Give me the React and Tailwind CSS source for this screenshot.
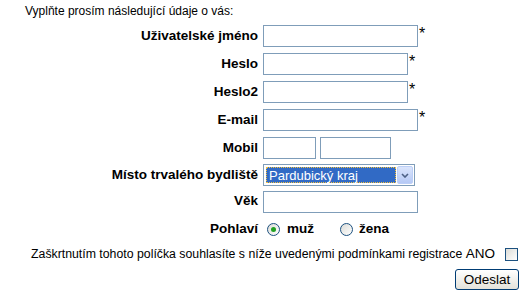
import { useState } from 'react';

const font = { fontFamily: '"Liberation Sans", Arial, sans-serif' };

function Row({ label, h = 'h-[28px]', children }) {
  return (
    <div className={`flex items-center ${h}`}>
      <div className="w-[258px] text-right text-[13.5px] font-bold text-black">{label}</div>
      <div className="ml-[5px] flex items-center">{children}</div>
    </div>
  );
}

function TextBox({ w = 'w-[155px]', type = 'text' }) {
  return (
    <input
      type={type}
      className={`${w} h-[22px] border border-[#7f9db9] bg-white px-1 text-[13px] outline-none`}
    />
  );
}

function Star() {
  return <span className="ml-[1px] self-start -mt-[1px] text-[16px] leading-[20px] text-black">*</span>;
}

function Radio({ checked, onClick }) {
  return (
    <span
      onClick={onClick}
      className="flex h-[13px] w-[13px] cursor-pointer items-center justify-center rounded-full border border-[#1c5180] bg-gradient-to-br from-[#dcdcd7] to-white"
    >
      {checked && <span className="h-[5px] w-[5px] rounded-full bg-[#21a121]" />}
    </span>
  );
}

export default function App() {
  const [sex, setSex] = useState('m');
  const [agree, setAgree] = useState(false);

  return (
    <div className="w-[530px] h-[298px] bg-white text-black" style={font}>
      <div className="h-[22px] pl-[25px] pt-[2px] text-[12px]">Vyplňte prosím následující údaje o vás:</div>

      <Row label="Uživatelské jméno">
        <TextBox />
        <Star />
      </Row>
      <Row label="Heslo">
        <TextBox w="w-[145px]" type="password" />
        <Star />
      </Row>
      <Row label="Heslo2">
        <TextBox w="w-[145px]" type="password" />
        <Star />
      </Row>
      <Row label="E-mail">
        <TextBox />
        <Star />
      </Row>
      <Row label="Mobil">
        <TextBox w="w-[53px]" />
        <span className="w-[4px]" />
        <TextBox w="w-[71px]" />
      </Row>
      <Row label="Místo trvalého bydliště" h="h-[26px]">
        <div className="flex h-[22px] w-[152px] items-center border border-[#7f9db9] bg-white pl-[2px] pr-[1px]">
          <div className="flex h-[16px] w-[130px] items-center border border-dotted border-[#f0c040] bg-[#316ac5] pl-[2px] text-[13px] leading-none text-white">
            Pardubický kraj
          </div>
          <div className="ml-auto flex h-[18px] w-[16px] items-center justify-center rounded-[2px] border border-[#bccff7] bg-gradient-to-b from-[#dbe5fc] to-[#b6c9f5]">
            <svg width="8" height="5" viewBox="0 0 8 5">
              <path d="M1 1 L4 4 L7 1" fill="none" stroke="#4d6185" strokeWidth="1.6" />
            </svg>
          </div>
        </div>
      </Row>
      <Row label="Věk" h="h-[27px]">
        <TextBox />
      </Row>
      <Row label="Pohlaví" h="h-[28px]">
        <div className="flex items-center text-[13.5px] font-bold">
          <span className="ml-[4px]" />
          <Radio checked={sex === 'm'} onClick={() => setSex('m')} />
          <span className="ml-[7px]">muž</span>
          <span className="ml-[26px]" />
          <Radio checked={sex === 'f'} onClick={() => setSex('f')} />
          <span className="ml-[6px]">žena</span>
        </div>
      </Row>

      <div className="flex h-[22px] w-[520px] items-center justify-end">
        <span className="text-[12.3px]">
          Zaškrtnutím tohoto políčka souhlasíte s níže uvedenými podmínkami registrace{' '}
          <span className="text-[13.5px]">ANO</span>
        </span>
        <span
          onClick={() => setAgree(!agree)}
          className="ml-[10px] mr-[2px] flex h-[13px] w-[13px] cursor-pointer items-center justify-center border border-[#1c5180] bg-gradient-to-br from-[#dcdcd7] to-white text-[10px] leading-none text-[#21a121]"
        >
          {agree ? '✓' : ''}
        </span>
      </div>

      <div className="mt-[4px] flex w-[520px] justify-end">
        <button className="mr-[1px] h-[21px] w-[64px] rounded-[3px] border border-[#003c74] bg-gradient-to-b from-white to-[#e3e2da] text-[13.5px] text-black">
          Odeslat
        </button>
      </div>
    </div>
  );
}
